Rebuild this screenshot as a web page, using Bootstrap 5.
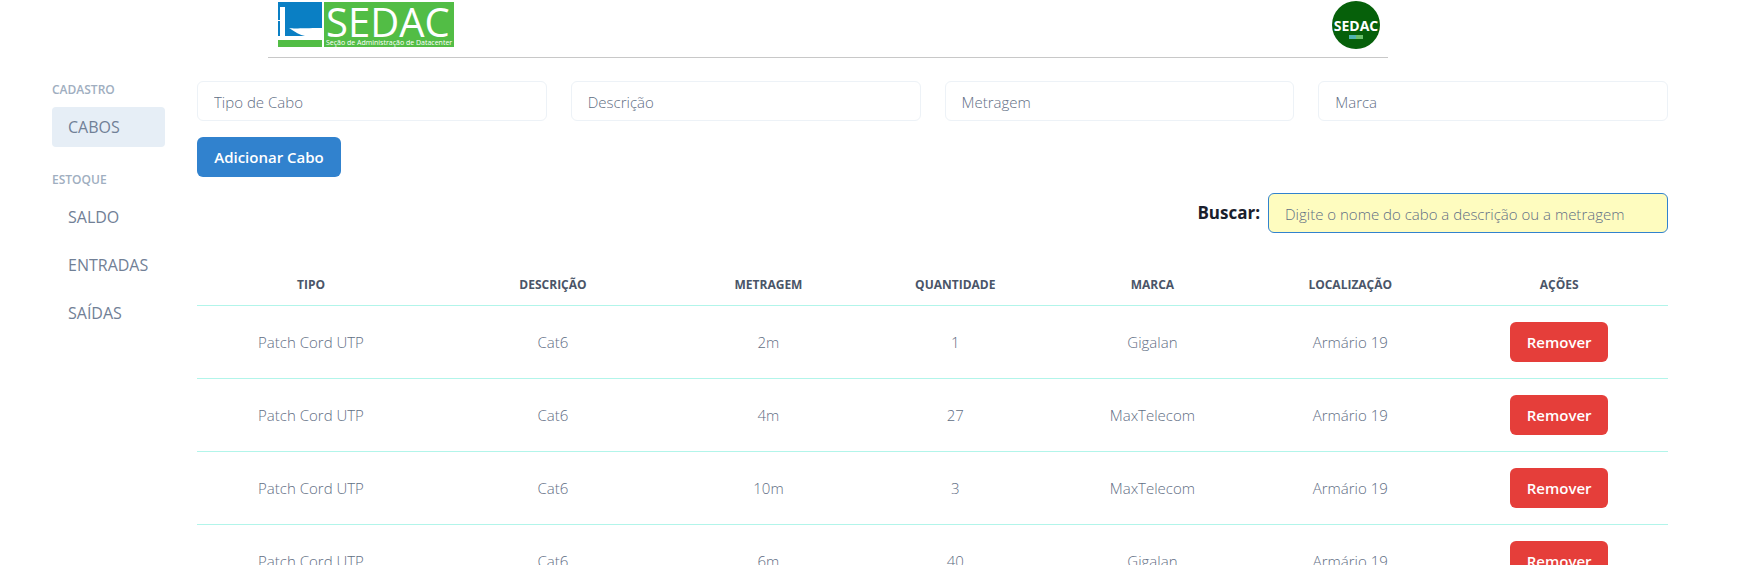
<!DOCTYPE html>
<html lang="pt-BR">
<head>
<meta charset="utf-8">
<meta name="viewport" content="width=device-width, initial-scale=1">
<title>SEDAC - Cabos</title>
<link href="https://cdn.jsdelivr.net/npm/bootstrap@5.3.0/dist/css/bootstrap.min.css" rel="stylesheet">
<style>
  body { font-family: "Open Sans", "Noto Sans", sans-serif; color: #1a202c; background: #fff; overflow-x: hidden; }
  svg { overflow: visible; }
  .top-area { padding-right: 103px; }
  .brand-bar { max-width: 1120px; height: 58px; border-bottom: 1px solid #c8c8c8; padding: 1px 8px 8px; }
  .page-body { padding: 23px 91px 0 52px; gap: 32px; }
  .side-menu { min-width: 113px; }
  .side-title { font-size: 12px; line-height: 18px; font-weight: 600; color: #a0aec0; }
  .side-menu .nav-link { height: 40px; line-height: 24px; padding: 8px 16px; border-radius: 4px; color: #718096; font-weight: 500; }
  .side-menu .nav-link.active { background: #e6eef6; }
  .form-control { height: 40px; padding: 2px 16px 0; border-radius: 6px; border-color: #edf2f7; font-size: 15px; font-weight: 300; }
  .form-control::placeholder { color: #5f6e84; opacity: 1; }
  .search-box { width: 400px; background: #fefcbf; border-color: #3182ce; }
  .search-box:focus { background: #fefcbf; }
  .search-label { font-size: 17px; font-weight: 700; line-height: 24px; }
  .btn { height: 40px; padding: 0 16px; border: 0; border-radius: 6px; font-size: 15px; font-weight: 600; }
  .btn-add { min-width: 144px; --bs-btn-bg: #3182ce; --bs-btn-color: #fff; --bs-btn-hover-bg: #2b6cb0; --bs-btn-hover-color: #fff; }
  .btn-remove { min-width: 98px; --bs-btn-bg: #e53e3a; --bs-btn-color: #fff; --bs-btn-hover-bg: #c53030; --bs-btn-hover-color: #fff; }
  .table-area { margin-top: 32px; }
  .cable-table { table-layout: fixed; border-color: #b2f5ea; }
  .cable-table th { font-size: 12px; line-height: 16px; font-weight: 700; padding: 12px 16px; color: #4a5568; }
  .cable-table td { padding: 16px; font-size: 15px; font-weight: 300; color: #5f6e84; }
</style>
</head>
<body>
<header class="top-area">
  <div class="brand-bar mx-auto d-flex justify-content-between align-items-start">
    <svg width="180" height="48" viewBox="0 0 180 48" role="img" aria-label="SEDAC">
      <rect x="2" y="1" width="44" height="34" fill="#0a7fc4"/>
      <path d="M4 6h5v29H4zM2 19h3v1H2zM13 27c6 1 13 0 33 0v8H29c-5-1-10-4-16-8z" fill="#fff"/>
      <rect x="2" y="39" width="44" height="7" fill="#52bd45"/>
      <rect x="48" y="1" width="130" height="45" fill="#52bd45"/>
      <text x="50" y="36" font-size="40" fill="#fff">SEDAC</text>
      <text x="50" y="44" font-size="7" fill="#fff">Seção de Administração de Datacenter</text>
    </svg>
    <svg width="48" height="48" viewBox="0 0 48 48" role="img" aria-label="SEDAC">
      <circle cx="24" cy="24" r="24" fill="#06600a"/>
      <text x="24" y="30" font-size="14" font-weight="700" text-anchor="middle" fill="#fff">SEDAC</text>
      <rect x="17" y="34" width="7" height="4" fill="#4fb3b0"/>
      <rect x="24" y="34" width="7" height="4" fill="#6cbf6a"/>
    </svg>
  </div>
</header>

<div class="page-body d-flex align-items-start">
  <nav class="side-menu d-flex flex-column gap-4 flex-shrink-0">
    <div class="d-flex flex-column gap-2">
      <div class="side-title">CADASTRO</div>
      <a class="nav-link active" href="#cabos">CABOS</a>
    </div>
    <div class="d-flex flex-column gap-2">
      <div class="side-title">ESTOQUE</div>
      <a class="nav-link" href="#saldo">SALDO</a>
      <a class="nav-link" href="#entradas">ENTRADAS</a>
      <a class="nav-link" href="#saidas">SAÍDAS</a>
    </div>
  </nav>

  <main class="flex-grow-1">
    <form>
      <div class="row gx-4">
        <div class="col-3"><input class="form-control" type="text" placeholder="Tipo de Cabo" aria-label="Tipo de Cabo"></div>
        <div class="col-3"><input class="form-control" type="text" placeholder="Descrição" aria-label="Descrição"></div>
        <div class="col-3"><input class="form-control" type="text" placeholder="Metragem" aria-label="Metragem"></div>
        <div class="col-3"><input class="form-control" type="text" placeholder="Marca" aria-label="Marca"></div>
      </div>
      <button class="btn btn-add mt-3 d-block" type="button">Adicionar Cabo</button>
    </form>

    <div class="d-flex justify-content-end align-items-center gap-2 mt-3">
      <label class="search-label" for="busca">Buscar:</label>
      <input class="form-control search-box" id="busca" type="text" placeholder="Digite o nome do cabo a descrição ou a metragem">
    </div>

    <div class="table-area">
    <table class="table cable-table text-center align-middle mb-0">
      <colgroup>
        <col style="width:15.5%"><col style="width:17.4%"><col style="width:11.9%"><col style="width:13.5%"><col style="width:13.3%"><col style="width:13.6%"><col style="width:14.8%">
      </colgroup>
      <thead>
        <tr><th>TIPO</th><th>DESCRIÇÃO</th><th>METRAGEM</th><th>QUANTIDADE</th><th>MARCA</th><th>LOCALIZAÇÃO</th><th>AÇÕES</th></tr>
      </thead>
      <tbody>
        <tr><td>Patch Cord UTP</td><td>Cat6</td><td>2m</td><td>1</td><td>Gigalan</td><td>Armário 19</td><td><button class="btn btn-remove" type="button">Remover</button></td></tr>
        <tr><td>Patch Cord UTP</td><td>Cat6</td><td>4m</td><td>27</td><td>MaxTelecom</td><td>Armário 19</td><td><button class="btn btn-remove" type="button">Remover</button></td></tr>
        <tr><td>Patch Cord UTP</td><td>Cat6</td><td>10m</td><td>3</td><td>MaxTelecom</td><td>Armário 19</td><td><button class="btn btn-remove" type="button">Remover</button></td></tr>
        <tr><td>Patch Cord UTP</td><td>Cat6</td><td>6m</td><td>40</td><td>Gigalan</td><td>Armário 19</td><td><button class="btn btn-remove" type="button">Remover</button></td></tr>
      </tbody>
    </table>
    </div>
  </main>
</div>
<script src="https://cdn.jsdelivr.net/npm/bootstrap@5.3.0/dist/js/bootstrap.bundle.min.js"></script>
</body>
</html>
